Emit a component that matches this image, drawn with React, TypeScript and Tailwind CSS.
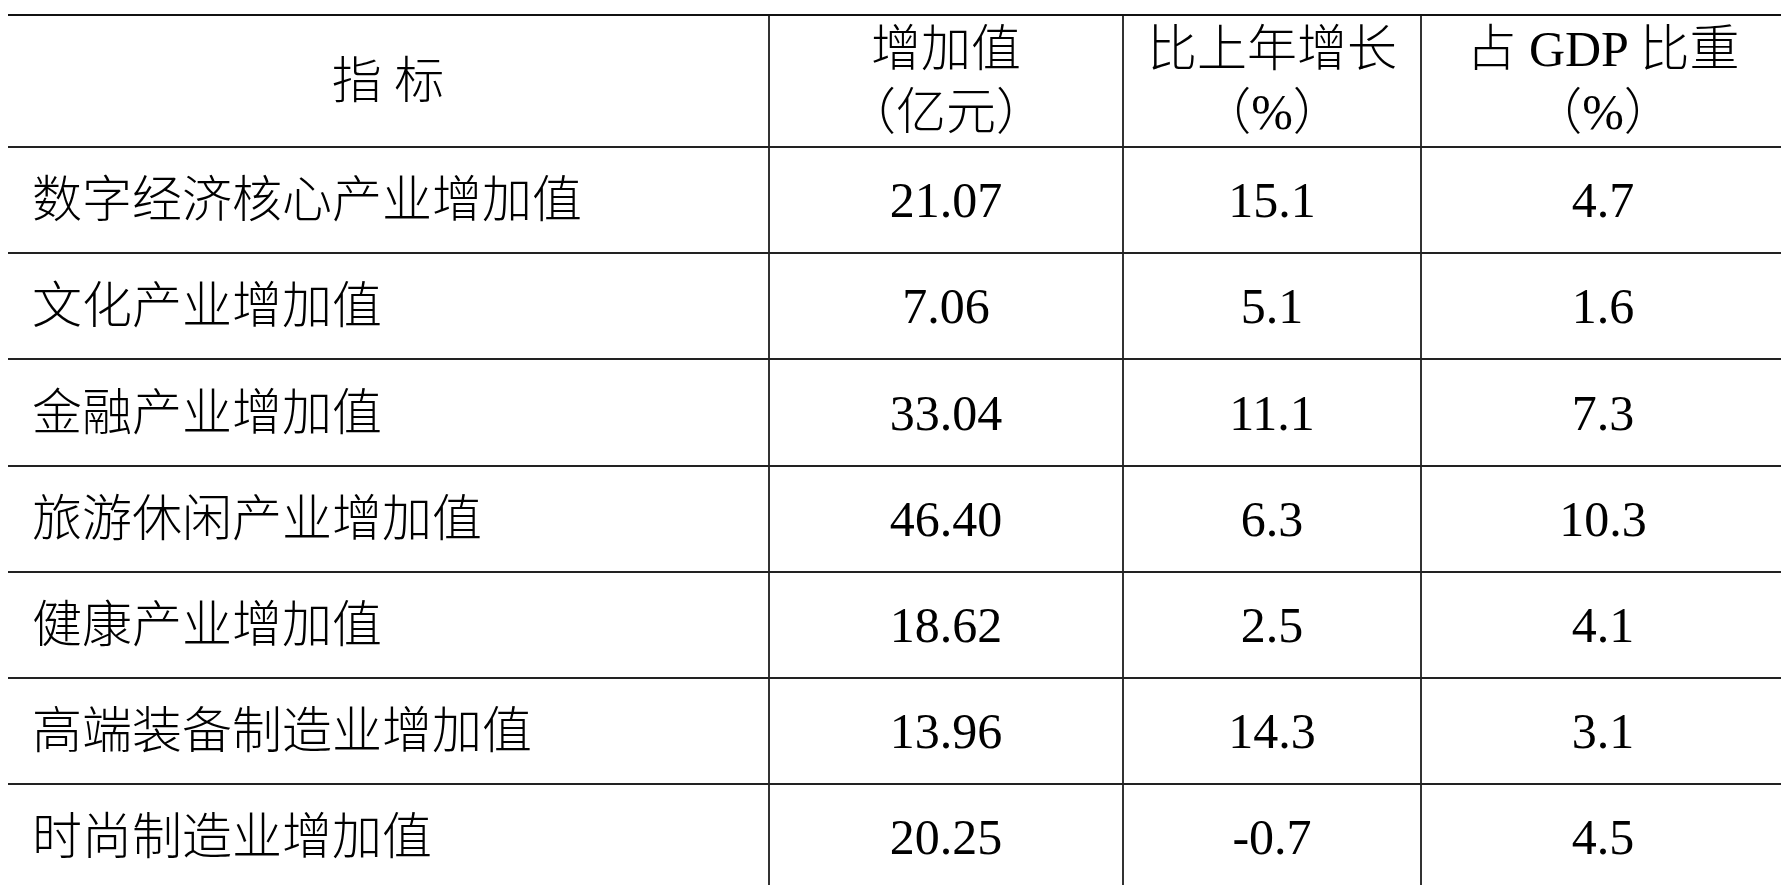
import React from "react";

const rows = [
  { name: "数字经济核心产业增加值", v: "21.07", g: "15.1", s: "4.7", h: "h-[106px]" },
  { name: "文化产业增加值", v: "7.06", g: "5.1", s: "1.6", h: "h-[106px]" },
  { name: "金融产业增加值", v: "33.04", g: "11.1", s: "7.3", h: "h-[107px]" },
  { name: "旅游休闲产业增加值", v: "46.40", g: "6.3", s: "10.3", h: "h-[106px]" },
  { name: "健康产业增加值", v: "18.62", g: "2.5", s: "4.1", h: "h-[106px]" },
  { name: "高端装备制造业增加值", v: "13.96", g: "14.3", s: "3.1", h: "h-[106px]" },
  { name: "时尚制造业增加值", v: "20.25", g: "-0.7", s: "4.5", h: "h-[106px]" },
];

const font = {
  fontFamily: '"Liberation Serif", "Noto Sans CJK SC", serif',
};

export default function App() {
  return (
    <div
      className="w-[1781px] h-[885px] overflow-hidden bg-white text-black font-light"
      style={font}
    >
      <div className="pt-[14px] pl-2 w-[1792px]">
        <div className="w-[1776px] border-t-2 border-[#111]">
          {/* header */}
          <div className="grid grid-cols-[760px_354px_298px_364px] h-[132px] border-b-2 border-[#222] text-[50px] leading-[63px]">
            <div className="flex items-center justify-center">指 标</div>
            <div className="flex flex-col items-center justify-center border-l-2 border-[#333]">
              <div>增加值</div>
              <div>（亿元）</div>
            </div>
            <div className="flex flex-col items-center justify-center border-l-2 border-[#333]">
              <div>比上年增长</div>
              <div>（%）</div>
            </div>
            <div className="flex flex-col items-center justify-center border-l-2 border-[#333]">
              <div>占 GDP 比重</div>
              <div>（%）</div>
            </div>
          </div>
          {rows.map((r) => (
            <div
              key={r.name}
              className={`grid grid-cols-[760px_354px_298px_364px] ${r.h} border-b-2 border-[#222] text-[50px] leading-none`}
            >
              <div className="flex items-center pl-6">{r.name}</div>
              <div className="flex items-center justify-center border-l-2 border-[#333]">{r.v}</div>
              <div className="flex items-center justify-center border-l-2 border-[#333]">{r.g}</div>
              <div className="flex items-center justify-center border-l-2 border-[#333]">{r.s}</div>
            </div>
          ))}
        </div>
      </div>
    </div>
  );
}
